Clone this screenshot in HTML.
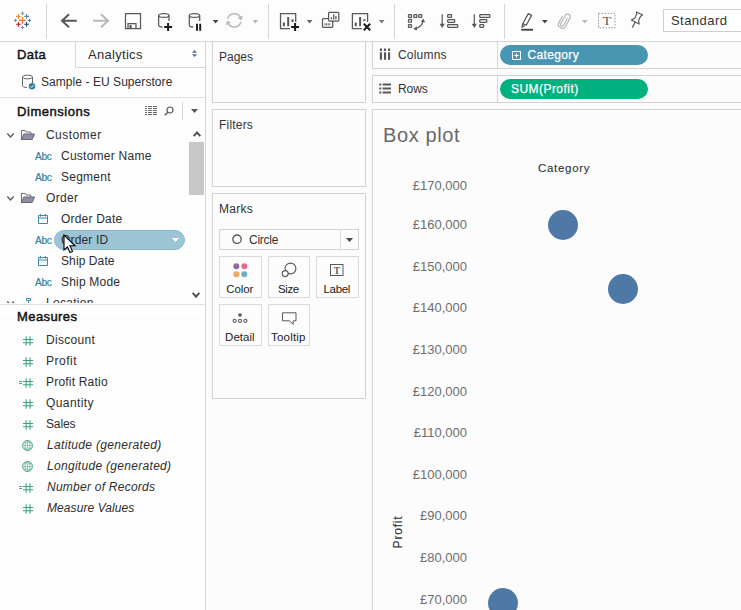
<!DOCTYPE html>
<html>
<head>
<meta charset="utf-8">
<title>Box plot</title>
<style>
html,body{margin:0;padding:0;}
body{width:741px;height:610px;overflow:hidden;background:#fdfdfd;font-family:"Liberation Sans",sans-serif;color:#333;position:relative;}
.abs{position:absolute;}
.t{position:absolute;line-height:1;white-space:nowrap;font-size:12px;color:#2e2e2e;}
.b{font-weight:normal;color:#111;font-size:13px;-webkit-text-stroke:0.45px #111;}
.ln{position:absolute;background:#d6d6d6;}
.card{position:absolute;border:1px solid #d2d2d2;background:#fcfcfc;box-sizing:border-box;}
.btn{position:absolute;border:1px solid #dadada;background:#fcfcfc;box-sizing:border-box;width:43px;height:42px;}
svg{position:absolute;overflow:visible;}
.abc{position:absolute;line-height:1;font-size:10.2px;color:#337d9b;letter-spacing:-0.35px;margin-top:0.3px;-webkit-text-stroke:0.2px #337d9b;}
.it{font-style:italic;}
.ax{position:absolute;line-height:1;white-space:nowrap;font-size:13px;letter-spacing:0px;color:#6e6e6e;text-align:right;width:60px;left:407px;}
</style>
</head>
<body>

<!-- ============ backgrounds ============ -->
<div class="abs" id="midbg" style="left:206px;top:42px;width:535px;height:568px;background:#fcfcfc;"></div>

<!-- ============ toolbar ============ -->
<div class="ln" style="left:0;top:41px;width:741px;height:1px;"></div>
<div class="ln" style="left:46px;top:4px;width:1px;height:35px;"></div>
<div class="ln" style="left:268px;top:4px;width:1px;height:35px;"></div>
<div class="ln" style="left:394px;top:4px;width:1px;height:35px;"></div>
<div class="ln" style="left:504px;top:4px;width:1px;height:35px;"></div>

<!-- TOOLBAR-ICONS -->
<svg style="left:0;top:0;" width="46" height="41" viewBox="0 0 46 41"><path d="M19.1 20.4 H25.9 M22.5 17.0 V23.799999999999997" stroke="#e8762d" stroke-width="1.3" fill="none"/><path d="M20.8 13.3 H24.2 M22.5 11.600000000000001 V15.0" stroke="#7099a6" stroke-width="1.0" fill="none"/><path d="M20.8 27.5 H24.2 M22.5 25.8 V29.2" stroke="#8583a8" stroke-width="1.0" fill="none"/><path d="M13.8 20.4 H17.2 M15.5 18.7 V22.099999999999998" stroke="#7099a6" stroke-width="1.0" fill="none"/><path d="M27.8 20.4 H31.2 M29.5 18.7 V22.099999999999998" stroke="#6b6f98" stroke-width="1.0" fill="none"/><path d="M16.1 16.4 H20.9 M18.5 13.999999999999998 V18.799999999999997" stroke="#eb912c" stroke-width="1.1" fill="none"/><path d="M24.200000000000003 16.4 H29.0 M26.6 13.999999999999998 V18.799999999999997" stroke="#59879b" stroke-width="1.1" fill="none"/><path d="M16.1 24.3 H20.9 M18.5 21.900000000000002 V26.7" stroke="#c72035" stroke-width="1.1" fill="none"/><path d="M24.200000000000003 24.3 H29.0 M26.6 21.900000000000002 V26.7" stroke="#1f447e" stroke-width="1.1" fill="none"/></svg>
<svg style="left:0;top:0;" width="741" height="41" viewBox="0 0 741 41"><path d="M62 20.8 H76.8 M69 14.3 L62 20.8 L69 27.3" stroke="#585858" stroke-width="2" fill="none"/><path d="M93 20.8 H107.8 M101 14.3 L108 20.8 L101 27.3" stroke="#b9b9b9" stroke-width="2" fill="none"/><path d="M125.5 13.5 H140.5 V28.5 H125.5 Z M128 28.5 V23.5 H136 V28.5" stroke="#585858" stroke-width="1.25" fill="none"/><rect x="129.5" y="25" width="2.2" height="3.5" fill="#585858"/><ellipse cx="163.8" cy="15.4" rx="5.2" ry="1.9" stroke="#585858" stroke-width="1.25" fill="none"/><path d="M158.6 15.4 V25 Q158.6 26.8 162.6 27.2 M169.0 15.4 V21" stroke="#585858" stroke-width="1.25" fill="none"/><path d="M164.2 27 H172 M168.1 23.1 V30.9" stroke="#1a1a1a" stroke-width="2" fill="none"/><ellipse cx="194.5" cy="15.4" rx="5.2" ry="1.9" stroke="#585858" stroke-width="1.25" fill="none"/><path d="M189.3 15.4 V25 Q189.3 26.8 193.3 27.2 M199.70000000000002 15.4 V21" stroke="#585858" stroke-width="1.25" fill="none"/><path d="M197 23.8 V30.7 M200.2 23.8 V30.7" stroke="#1a1a1a" stroke-width="1.9" fill="none"/><path d="M212.8 20 H218.4 L215.60000000000002 23.4 Z" fill="#444"/><path d="M227.6 19 A7 7 0 0 1 240.6 17.6 M241 21.8 A7 7 0 0 1 228 23.2" stroke="#b9b9b9" stroke-width="1.5" fill="none"/><path d="M242.8 15.5 L241.6 20.2 L237.6 18 Z M225.8 25.3 L227 20.6 L231 22.8 Z" fill="#b9b9b9"/><path d="M252.6 20 H258.2 L255.4 23.4 Z" fill="#b9b9b9"/><path d="M295.7 22 V13.5 H280.5 V28.5 H290.0" stroke="#585858" stroke-width="1.25" fill="none"/><path d="M283.9 26.2 V22.4 M288.2 26.2 V17 M292.5 22 V19.3" stroke="#585858" stroke-width="2" fill="none"/><path d="M291.2 27 H299 M295.1 23.1 V30.9" stroke="#1a1a1a" stroke-width="2" fill="none"/><path d="M306.8 20 H312.40000000000003 L309.6 23.4 Z" fill="#666"/><rect x="328.6" y="12.3" width="10.2" height="8.8" rx="1" stroke="#585858" stroke-width="1.25" fill="none"/><path d="M328.6 18.5 H323.4 Q322.5 18.5 322.5 19.4 V26.4 Q322.5 27.3 323.4 27.3 H331.8 Q332.7 27.3 332.7 26.4 V21.1" stroke="#585858" stroke-width="1.25" fill="none"/><path d="M331.5 19.4 V17.3 M333.7 19.4 V14.3 M335.9 19.4 V16" stroke="#585858" stroke-width="1.25" fill="none"/><path d="M325 25.5 V23.3 M326.6 25.5 V23.3 M328.2 25.5 V23.3 M329.8 25.5 V23.3" stroke="#585858" stroke-width="0.9" fill="none"/><path d="M367.59999999999997 22 V13.5 H352.4 V28.5 H361.9" stroke="#585858" stroke-width="1.25" fill="none"/><path d="M355.79999999999995 26.2 V22.4 M360.09999999999997 26.2 V17 M364.4 21 V19.3" stroke="#585858" stroke-width="2" fill="none"/><path d="M363.8 23.8 L370.2 30.2 M370.2 23.8 L363.8 30.2" stroke="#1a1a1a" stroke-width="2" fill="none"/><path d="M378.9 20 H384.5 L381.7 23.4 Z" fill="#777"/><rect x="408.5" y="14.6" width="3" height="2.8" rx="0.5" stroke="#585858" stroke-width="1.25" fill="none"/><rect x="413.8" y="14.6" width="3" height="2.8" rx="0.5" stroke="#585858" stroke-width="1.25" fill="none"/><rect x="418.8" y="14.6" width="3" height="2.8" rx="0.5" stroke="#585858" stroke-width="1.25" fill="none"/><rect x="408.5" y="19.4" width="3" height="2.8" rx="0.5" stroke="#585858" stroke-width="1.25" fill="none"/><rect x="408.5" y="24.6" width="3" height="2.8" rx="0.5" stroke="#585858" stroke-width="1.25" fill="none"/><path d="M423 20.5 Q422.5 27 415 28.6" stroke="#585858" stroke-width="1.2" fill="none"/><path d="M423.2 18.6 L425.2 22.2 L420.9 22 Z M413.2 28.9 L416.6 26.6 L417.2 30.6 Z" fill="#585858"/><path d="M442.2 14.2 V25 " stroke="#585858" stroke-width="1.2" fill="none"/><path d="M439.59999999999997 23.8 H444.8 L442.2 28 Z" fill="#585858"/><rect x="447.7" y="14.7" width="3.8" height="2.7" rx="0.5" stroke="#585858" stroke-width="1.25" fill="none"/><rect x="447.7" y="19.65" width="7" height="2.7" rx="0.5" stroke="#585858" stroke-width="1.25" fill="none"/><rect x="447.7" y="24.6" width="10" height="2.7" rx="0.5" stroke="#585858" stroke-width="1.25" fill="none"/><path d="M474.3 14.2 V25 " stroke="#585858" stroke-width="1.2" fill="none"/><path d="M471.7 23.8 H476.90000000000003 L474.3 28 Z" fill="#585858"/><rect x="479.8" y="14.7" width="10" height="2.7" rx="0.5" stroke="#585858" stroke-width="1.25" fill="none"/><rect x="479.8" y="19.65" width="7" height="2.7" rx="0.5" stroke="#585858" stroke-width="1.25" fill="none"/><rect x="479.8" y="24.6" width="3.8" height="2.7" rx="0.5" stroke="#585858" stroke-width="1.25" fill="none"/><path d="M528.3 13.6 L531.6 15.4 L526.2 25.3 L522.9 23.5 Z M522.9 23.5 L522 27.2 L524.6 25.6" stroke="#585858" stroke-width="1.25" fill="none" stroke-linejoin="round"/><rect x="521.2" y="28.8" width="11.8" height="1.9" fill="#444"/><path d="M542 20 H547.6 L544.8 23.4 Z" fill="#444"/><g transform="translate(564.3,20.6) rotate(28)"><path d="M1.6 -3.5 V4.2 Q1.6 6 0 6 Q-1.6 6 -1.6 4.2 V-4.6 Q-1.6 -7.6 1.1 -7.6 Q3.8 -7.6 3.8 -4.6 V4.6 Q3.8 8 0 8 Q-3.8 8 -3.8 4.6 V-3.2" stroke="#b9b9b9" stroke-width="1.3" fill="none"/></g><path d="M582 20 H587.6 L584.8 23.4 Z" fill="#b9b9b9"/><rect x="598.5" y="13.3" width="16.5" height="14.5" stroke="#9a9a9a" stroke-width="1" stroke-dasharray="1.6 1.4" fill="none"/><text x="0" y="0" transform="translate(607,25.4) scale(1.15,1)" font-family="Liberation Serif, serif" font-size="12.5" fill="#606060" text-anchor="middle">T</text><g transform="translate(636.1,20.3) rotate(27)"><path d="M-3.4 -7.6 H3.4 L2.2 -5.6 V-1.2 L4.4 1.9 H-4.4 L-2.2 -1.2 V-5.6 Z M0 1.9 V8.2" stroke="#585858" stroke-width="1.2" fill="none" stroke-linejoin="round"/></g></svg>

<div class="abs" style="left:663px;top:9px;width:90px;height:23px;border:1px solid #cfcfcf;background:#fff;box-sizing:border-box;"></div>
<div class="t" style="left:671px;top:14px;letter-spacing:0.45px;font-size:13px;color:#333;">Standard</div>

<!-- ============ left data pane ============ -->
<div class="ln" style="left:205px;top:42px;width:1px;height:568px;"></div>
<div class="ln" style="left:75px;top:42px;width:1px;height:26px;"></div>
<div class="ln" style="left:75px;top:67px;width:130px;height:1px;"></div>
<div class="t b" style="left:17px;top:48px;letter-spacing:0.4px;">Data</div>
<div class="t" style="left:88px;top:48px;letter-spacing:0.3px;font-size:13px;">Analytics</div>
<svg style="left:192px;top:50px;" width="5" height="7" viewBox="0 0 5 7"><path d="M0 2.8 L2.5 0 L5 2.8 Z M0 4.2 L2.5 7 L5 4.2 Z" fill="#4f6f9a"/></svg>

<!-- DATASOURCE -->
<svg style="left:20px;top:73px;" width="18" height="18" viewBox="0 0 18 18"><ellipse cx="7.5" cy="4" rx="5" ry="1.9" stroke="#666" stroke-width="1" fill="none"/><path d="M2.5 4 V12.6 Q2.5 14.4 7 14.6 M12.5 4 V10" stroke="#666" stroke-width="1" fill="none"/><circle cx="12" cy="13.2" r="3.2" fill="#2f7fa3"/><path d="M10.4 13.2 L11.6 14.4 L13.7 12.1" stroke="#fff" stroke-width="0.9" fill="none"/></svg>
<div class="t" style="left:41px;top:76px;letter-spacing:0.06px;">Sample - EU Superstore</div>
<div class="ln" style="left:0;top:97px;width:205px;height:1px;background:#e0e0e0;"></div>

<div class="t b" style="left:17px;top:105px;letter-spacing:0.55px;">Dimensions</div>
<div class="ln" style="left:182px;top:102px;width:1px;height:18px;"></div>
<svg style="left:191px;top:109px;" width="7" height="4" viewBox="0 0 7 4"><path d="M0 0 L7 0 L3.5 4 Z" fill="#555"/></svg>

<!-- DIM-ROWS -->
<svg style="left:7px;top:133px;" width="7" height="5" viewBox="0 0 7 5"><path d="M0.3 0.6 L3.5 3.9 L6.7 0.6" fill="none" stroke="#5a5a5a" stroke-width="1.4"/></svg><svg style="left:21px;top:130px;" width="14" height="10" viewBox="0 0 15 10" preserveAspectRatio="none"><path d="M0.5 9.5 V0.5 H4.5 L5.5 2 H10.5 V4" fill="none" stroke="#666" stroke-width="1"/><path d="M0.5 9.5 L3 4 H14.5 L12 9.5 Z" fill="#8d8fa8" stroke="#666" stroke-width="1" stroke-linejoin="round"/></svg><div class="t" style="left:46px;top:129px;letter-spacing:0.45px;">Customer</div>
<div class="abc" style="left:35px;top:152px;">Abc</div><div class="t" style="left:61px;top:150px;letter-spacing:0.25px;">Customer Name</div>
<div class="abc" style="left:35px;top:173px;">Abc</div><div class="t" style="left:61px;top:171px;letter-spacing:0.25px;">Segment</div>
<svg style="left:7px;top:196px;" width="7" height="5" viewBox="0 0 7 5"><path d="M0.3 0.6 L3.5 3.9 L6.7 0.6" fill="none" stroke="#5a5a5a" stroke-width="1.4"/></svg><svg style="left:21px;top:193px;" width="14" height="10" viewBox="0 0 15 10" preserveAspectRatio="none"><path d="M0.5 9.5 V0.5 H4.5 L5.5 2 H10.5 V4" fill="none" stroke="#666" stroke-width="1"/><path d="M0.5 9.5 L3 4 H14.5 L12 9.5 Z" fill="#8d8fa8" stroke="#666" stroke-width="1" stroke-linejoin="round"/></svg><div class="t" style="left:46px;top:192px;letter-spacing:0.3px;">Order</div>
<svg style="left:38px;top:214px;" width="10" height="10" viewBox="0 0 10 10"><path d="M0.5 1.5 H9.5 V9.5 H0.5 Z M0.5 4 H9.5 M2.5 0 V2.5 M7.5 0 V2.5" fill="none" stroke="#3f8aa5" stroke-width="1"/></svg><div class="t" style="left:61px;top:213px;letter-spacing:0.2px;">Order Date</div>
<div class="abc" style="left:35px;top:236px;">Abc</div><div class="abs" style="left:54px;top:230px;width:131px;height:20px;border-radius:10px;background:#9cc4d5;border:1px solid #8fbacd;box-sizing:border-box;"></div><div class="t" style="left:61px;top:234px;letter-spacing:0.15px;">Order ID</div><svg style="left:172px;top:238px;" width="7" height="4" viewBox="0 0 7 4"><path d="M0 0 L7 0 L3.5 4 Z" fill="#fff"/></svg>
<svg style="left:38px;top:256px;" width="10" height="10" viewBox="0 0 10 10"><path d="M0.5 1.5 H9.5 V9.5 H0.5 Z M0.5 4 H9.5 M2.5 0 V2.5 M7.5 0 V2.5" fill="none" stroke="#3f8aa5" stroke-width="1"/></svg><div class="t" style="left:61px;top:255px;letter-spacing:0.1px;">Ship Date</div>
<div class="abc" style="left:35px;top:278px;">Abc</div><div class="t" style="left:61px;top:276px;letter-spacing:0.2px;">Ship Mode</div>
<div class="abs" style="left:0;top:290px;width:189px;height:13px;overflow:hidden;"><div class="t" style="left:46px;top:7px;letter-spacing:0.3px;">Location</div><svg style="left:26px;top:8px;" width="6" height="8" viewBox="0 0 6 8"><path d="M0.5 0.5 H4.5 V2.5 H0.5 Z M2.5 2.5 V8" fill="none" stroke="#3f8aa5" stroke-width="1"/></svg><svg style="left:7px;top:11px;" width="7" height="5" viewBox="0 0 7 5"><path d="M0.3 0.6 L3.5 3.9 L6.7 0.6" fill="none" stroke="#5a5a5a" stroke-width="1.4"/></svg></div>
<svg style="left:63px;top:233.5px;" width="14" height="20" viewBox="0 0 14 20"><path d="M1 1 V16 L4.5 12.8 L7 18.5 L9.5 17.4 L7 11.8 H12 Z" fill="#fff" stroke="#000" stroke-width="1.1" stroke-linejoin="miter"/></svg>
<div class="abs" style="left:189px;top:142px;width:15px;height:53px;background:#c8c8c8;"></div>
<svg style="left:192.6px;top:130.6px;" width="8" height="6" viewBox="0 0 8 6"><path d="M0.7 5.2 L4 1.5 L7.3 5.2" fill="none" stroke="#505050" stroke-width="1.9"/></svg>
<svg style="left:192.3px;top:292.2px;" width="8" height="6" viewBox="0 0 8 6"><path d="M0.7 0.8 L4 4.7 L7.3 0.8" fill="none" stroke="#505050" stroke-width="1.9"/></svg>
<svg style="left:145px;top:106px;" width="12" height="10" viewBox="0 0 12 10"><path d="M0 0.5 H12 M0 2.5 H12 M0 4.5 H12 M0 6.5 H12 M0 8.5 H12" stroke="#666" stroke-width="1" fill="none"/><path d="M2.4 0 V9 M7.4 0 V9" stroke="#fdfdfd" stroke-width="1"/></svg>
<svg style="left:164.4px;top:105.6px;" width="10" height="10" viewBox="0 0 10 10"><circle cx="6" cy="4" r="3" fill="none" stroke="#555" stroke-width="1.2"/><path d="M3.8 6.2 L0.8 9.2" stroke="#555" stroke-width="1.4"/></svg>

<div class="ln" style="left:0;top:304px;width:205px;height:1px;background:#e0e0e0;"></div>
<div class="abs" style="left:0;top:305px;width:205px;height:10px;background:#fff;"></div>
<div class="t b" style="left:17px;top:310px;letter-spacing:0.42px;">Measures</div>

<!-- MEAS-ROWS -->
<svg style="left:23px;top:336px;" width="10" height="10" viewBox="0 0 10 10"><path d="M3.2 0.2 V9.8 M7 0.2 V9.8 M0 3.4 H10.2 M0 6.8 H10.2" stroke="#3fa27f" stroke-width="1.05" fill="none"/></svg>
<div class="t" style="left:46px;top:334px;letter-spacing:0.3px;">Discount</div>
<svg style="left:23px;top:357px;" width="10" height="10" viewBox="0 0 10 10"><path d="M3.2 0.2 V9.8 M7 0.2 V9.8 M0 3.4 H10.2 M0 6.8 H10.2" stroke="#3fa27f" stroke-width="1.05" fill="none"/></svg>
<div class="t" style="left:46px;top:355px;letter-spacing:0.5px;">Profit</div>
<svg style="left:19px;top:378px;" width="14" height="10" viewBox="0 0 14 10"><path d="M7.2 0.2 V9.8 M11 0.2 V9.8 M4 3.4 H14.2 M4 6.8 H14.2" stroke="#3fa27f" stroke-width="1.05" fill="none"/><path d="M0.2 3.5 H3 M0.2 5.5 H3" stroke="#3fa27f" stroke-width="1" fill="none"/></svg>
<div class="t" style="left:46px;top:376px;letter-spacing:0.2px;">Profit Ratio</div>
<svg style="left:23px;top:399px;" width="10" height="10" viewBox="0 0 10 10"><path d="M3.2 0.2 V9.8 M7 0.2 V9.8 M0 3.4 H10.2 M0 6.8 H10.2" stroke="#3fa27f" stroke-width="1.05" fill="none"/></svg>
<div class="t" style="left:46px;top:397px;letter-spacing:0.4px;">Quantity</div>
<svg style="left:23px;top:420px;" width="10" height="10" viewBox="0 0 10 10"><path d="M3.2 0.2 V9.8 M7 0.2 V9.8 M0 3.4 H10.2 M0 6.8 H10.2" stroke="#3fa27f" stroke-width="1.05" fill="none"/></svg>
<div class="t" style="left:46px;top:418px;letter-spacing:-0.15px;">Sales</div>
<svg style="left:22px;top:440px;" width="11" height="11" viewBox="0 0 11 11"><circle cx="5.5" cy="5.5" r="4.9" fill="none" stroke="#3fa27f" stroke-width="1"/><ellipse cx="5.5" cy="5.5" rx="2.5" ry="4.9" fill="none" stroke="#3fa27f" stroke-width="0.6"/><path d="M0.6 5.5 H10.4 M1.6 2.9 H9.4 M1.6 8.1 H9.4 M5.5 0.6 V10.4" stroke="#3fa27f" stroke-width="0.45" fill="none"/></svg>
<div class="t it" style="left:47px;top:439px;letter-spacing:0.32px;">Latitude (generated)</div>
<svg style="left:22px;top:461px;" width="11" height="11" viewBox="0 0 11 11"><circle cx="5.5" cy="5.5" r="4.9" fill="none" stroke="#3fa27f" stroke-width="1"/><ellipse cx="5.5" cy="5.5" rx="2.5" ry="4.9" fill="none" stroke="#3fa27f" stroke-width="0.6"/><path d="M0.6 5.5 H10.4 M1.6 2.9 H9.4 M1.6 8.1 H9.4 M5.5 0.6 V10.4" stroke="#3fa27f" stroke-width="0.45" fill="none"/></svg>
<div class="t it" style="left:47px;top:460px;letter-spacing:0.3px;">Longitude (generated)</div>
<svg style="left:19px;top:483px;" width="14" height="10" viewBox="0 0 14 10"><path d="M7.2 0.2 V9.8 M11 0.2 V9.8 M4 3.4 H14.2 M4 6.8 H14.2" stroke="#3fa27f" stroke-width="1.05" fill="none"/><path d="M0.2 3.5 H3 M0.2 5.5 H3" stroke="#3fa27f" stroke-width="1" fill="none"/></svg>
<div class="t it" style="left:47px;top:481px;letter-spacing:0.25px;">Number of Records</div>
<svg style="left:23px;top:504px;" width="10" height="10" viewBox="0 0 10 10"><path d="M3.2 0.2 V9.8 M7 0.2 V9.8 M0 3.4 H10.2 M0 6.8 H10.2" stroke="#3fa27f" stroke-width="1.05" fill="none"/></svg>
<div class="t it" style="left:47px;top:502px;letter-spacing:0.08px;">Measure Values</div>

<!-- ============ middle cards ============ -->
<div class="card" style="left:212px;top:42px;width:154px;height:61px;border-top:none;"></div>
<div class="t" style="left:219px;top:51px;color:#333;">Pages</div>
<div class="card" style="left:212px;top:109px;width:154px;height:78px;"></div>
<div class="t" style="left:219px;top:119px;color:#333;letter-spacing:0.2px;">Filters</div>
<div class="card" style="left:212px;top:193px;width:154px;height:206px;"></div>
<div class="t" style="left:219px;top:203px;color:#333;letter-spacing:0.3px;">Marks</div>

<!-- MARKS -->
<div class="abs" style="left:219px;top:229px;width:140px;height:21px;border:1px solid #d4d4d4;background:#fcfcfc;box-sizing:border-box;"></div>
<div class="ln" style="left:340px;top:230px;width:1px;height:19px;background:#dcdcdc;"></div>
<svg style="left:346px;top:238px;" width="7" height="4" viewBox="0 0 7 4"><path d="M0 0 L7 0 L3.5 4 Z" fill="#444"/></svg>
<svg style="left:232px;top:234px;" width="10" height="10" viewBox="0 0 10 10"><circle cx="5" cy="5.2" r="4.2" stroke="#585858" stroke-width="1.3" fill="none"/></svg>
<div class="t" style="left:249px;top:234px;color:#333;letter-spacing:-0.25px;">Circle</div>
<div class="btn" style="left:219px;top:256px;"></div>
<div class="btn" style="left:268px;top:256px;width:42px;"></div>
<div class="btn" style="left:316px;top:256px;"></div>
<div class="btn" style="left:219px;top:304px;"></div>
<div class="btn" style="left:268px;top:304px;width:42px;"></div>
<svg style="left:232px;top:262px;" width="17" height="17" viewBox="0 0 17 17"><circle cx="4.3" cy="4.3" r="3" fill="#8e6c9e"/><circle cx="12.3" cy="4.3" r="3" fill="#ea6b80"/><circle cx="4.3" cy="12.3" r="3" fill="#f2a75e"/><circle cx="12.3" cy="12.3" r="3" fill="#74aacb"/></svg>
<svg style="left:281px;top:262px;" width="16" height="16" viewBox="0 0 16 16"><circle cx="9.5" cy="6.5" r="5.4" stroke="#585858" stroke-width="1.1" fill="none"/><circle cx="4.2" cy="11.6" r="3" stroke="#585858" stroke-width="1.1" fill="#fbfbfb"/></svg>
<svg style="left:329px;top:263px;" width="16" height="14" viewBox="0 0 16 14"><rect x="1.5" y="1.5" width="12.5" height="11" stroke="#585858" stroke-width="1" fill="none"/><text x="7.8" y="10.6" font-family="Liberation Serif, serif" font-size="9.5" font-weight="bold" fill="#606060" text-anchor="middle">T</text></svg>
<svg style="left:232px;top:312px;" width="16" height="12" viewBox="0 0 16 12"><circle cx="8" cy="3" r="1.8" fill="#585858"/><circle cx="2.6" cy="8.8" r="1.6" stroke="#585858" stroke-width="1.05" fill="none"/><circle cx="8" cy="8.8" r="1.6" stroke="#585858" stroke-width="1.05" fill="none"/><circle cx="13.4" cy="8.8" r="1.6" stroke="#585858" stroke-width="1.05" fill="none"/></svg>
<svg style="left:281px;top:311px;" width="16" height="14" viewBox="0 0 16 14"><path d="M1.5 1.8 H15 V9.8 H12.2 V13.4 L8.6 9.8 H1.5 Z" stroke="#585858" stroke-width="1" fill="none" stroke-linejoin="round"/></svg>
<div class="t" style="left:218.2px;top:283.6px;width:43px;text-align:center;color:#222;font-size:11.5px;letter-spacing:-0.1px;">Color</div>
<div class="t" style="left:267.4px;top:283.6px;width:42px;text-align:center;color:#222;font-size:11.5px;letter-spacing:-0.45px;">Size</div>
<div class="t" style="left:315.3px;top:283.6px;width:43px;text-align:center;color:#222;font-size:11.5px;letter-spacing:-0.3px;">Label</div>
<div class="t" style="left:218.3px;top:331.6px;width:43px;text-align:center;color:#222;font-size:11.5px;letter-spacing:0px;">Detail</div>
<div class="t" style="left:267.4px;top:331.6px;width:42px;text-align:center;color:#222;font-size:11.5px;letter-spacing:0.2px;">Tooltip</div>

<!-- ============ shelves ============ -->
<div class="card" style="left:372px;top:42px;width:380px;height:27px;border-top:none;"></div>
<div class="ln" style="left:497px;top:42px;width:1px;height:26px;"></div>
<div class="card" style="left:372px;top:75px;width:380px;height:28px;"></div>
<div class="ln" style="left:497px;top:76px;width:1px;height:26px;"></div>
<div class="t" style="left:398px;top:49px;letter-spacing:0.2px;color:#333;">Columns</div>
<div class="t" style="left:398px;top:83px;letter-spacing:-0.05px;color:#333;">Rows</div>

<div class="abs" style="left:500px;top:45px;width:148px;height:20px;border-radius:10px;background:#4996b2;"></div>
<div class="t" style="left:527.5px;top:49px;color:#fff;letter-spacing:0.35px;-webkit-text-stroke:0.25px #fff;">Category</div>
<div class="abs" style="left:500px;top:79px;width:148px;height:20px;border-radius:10px;background:#00b180;"></div>
<div class="t" style="left:511px;top:83px;letter-spacing:0.45px;color:#fff;-webkit-text-stroke:0.25px #fff;">SUM(Profit)</div>

<svg style="left:379px;top:48px;" width="12" height="12" viewBox="0 0 12 12"><path d="M1.9 4.2 V11.8 M6 4.2 V11.8 M10.1 4.2 V11.8" stroke="#585858" stroke-width="2.1" fill="none"/><path d="M1.9 0.6 V2.9 M6 0.6 V2.9 M10.1 0.6 V2.9" stroke="#585858" stroke-width="2.1" fill="none"/></svg>
<svg style="left:379px;top:83px;" width="12" height="11" viewBox="0 0 12 11"><path d="M3.6 1.4 H12 M3.6 5.4 H12 M3.6 9.4 H12" stroke="#585858" stroke-width="2" fill="none"/><path d="M0.2 1.4 H2.2 M0.2 5.4 H2.2 M0.2 9.4 H2.2" stroke="#585858" stroke-width="2" fill="none"/></svg>
<svg style="left:512px;top:51px;" width="9" height="9" viewBox="0 0 9 9"><rect x="0.5" y="0.5" width="8" height="8" stroke="#fff" stroke-width="1" fill="none"/><path d="M2.3 4.5 H6.7 M4.5 2.3 V6.7" stroke="#fff" stroke-width="1" fill="none"/></svg>
<!-- ============ viz ============ -->
<div class="card" style="left:372px;top:109px;width:380px;height:520px;"></div>
<div class="t" style="left:383px;top:125px;letter-spacing:0.6px;font-size:20px;color:#686868;">Box plot</div>
<div class="t" style="left:538px;top:163.3px;color:#333;font-size:11.5px;letter-spacing:0.7px;-webkit-text-stroke:0.12px #333;">Category</div>

<!-- AXIS -->
<div class="ax" style="top:593px;">£70,000</div>
<div class="ax" style="top:551px;">£80,000</div>
<div class="ax" style="top:509px;">£90,000</div>
<div class="ax" style="top:468px;">£100,000</div>
<div class="ax" style="top:426px;">£110,000</div>
<div class="ax" style="top:385px;">£120,000</div>
<div class="ax" style="top:343px;">£130,000</div>
<div class="ax" style="top:301px;">£140,000</div>
<div class="ax" style="top:260px;">£150,000</div>
<div class="ax" style="top:218px;">£160,000</div>
<div class="ax" style="top:179px;">£170,000</div>
<div class="t" style="left:398px;top:532px;color:#333;-webkit-text-stroke:0.1px #333;letter-spacing:0.8px;transform:translate(-50%,-50%) rotate(-90deg);">Profit</div>

<div class="abs" style="left:548px;top:210px;width:30px;height:30px;border-radius:50%;background:#4e79a7;"></div>
<div class="abs" style="left:608px;top:274px;width:30px;height:30px;border-radius:50%;background:#4e79a7;"></div>
<div class="abs" style="left:488px;top:588px;width:30px;height:30px;border-radius:50%;background:#4e79a7;"></div>

</body>
</html>
